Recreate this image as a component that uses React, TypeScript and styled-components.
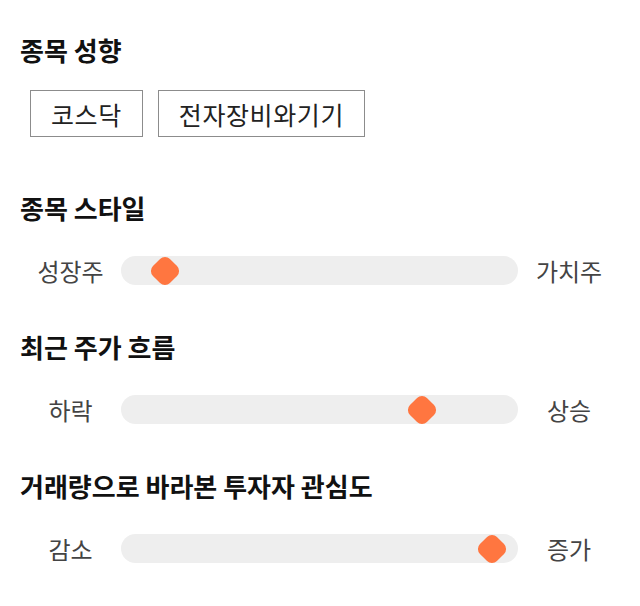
import * as React from 'react';
import styled, { createGlobalStyle } from 'styled-components';

const GlobalStyle = createGlobalStyle`
  body {
    margin: 0;
    background: #ffffff;
    font-family: "Noto Sans CJK KR", "Noto Sans", sans-serif;
  }
`;

const Page = styled.div`
  width: 640px;
  box-sizing: border-box;
  padding: 34px 20px 0 20px;
`;

const Section = styled.section<{ $after: number }>`
  display: flex;
  flex-direction: column;
  margin-bottom: ${(p) => p.$after}px;
`;

const Heading = styled.h2<{ $space: number }>`
  margin: 0 0 ${(p) => p.$space}px 0;
  font-size: 26px;
  line-height: 32px;
  font-weight: 700;
  color: #111111;
`;

const TagList = styled.div`
  display: flex;
  gap: 15px;
  padding-left: 10px;
`;

const Tag = styled.div`
  height: 47px;
  box-sizing: border-box;
  border: 1px solid #8c8c8c;
  padding: 0 20px;
  display: flex;
  align-items: center;
  font-size: 25px;
  letter-spacing: 0.6px;
  color: #222222;
`;

const SliderRow = styled.div`
  display: grid;
  grid-template-columns: 101px 397px 102px;
  align-items: center;
  height: 40px;
`;

const SideLabel = styled.span`
  text-align: center;
  font-size: 24px;
  color: #444444;
`;

const Track = styled.div`
  position: relative;
  height: 29px;
  border-radius: 15px;
  background: #eeeeee;
`;

const Thumb = styled.div`
  position: absolute;
  top: 50%;
  width: 24px;
  height: 24px;
  border-radius: 7px;
  background: #ff7640;
  transform: translate(-50%, -50%) rotate(45deg);
`;

interface ISliderProps {
  title: string;
  left: string;
  right: string;
  value: number;
  after: number;
}

const StyleSlider: React.FunctionComponent<ISliderProps> = ({ title, left, right, value, after }) => (
  <Section $after={after}>
    <Heading $space={26}>{title}</Heading>
    <SliderRow>
      <SideLabel>{left}</SideLabel>
      <Track>
        {/* thumb centre as a fraction of the track width */}
        <Thumb style={{ left: `${value * 100}%`, marginTop: 1 }} />
      </Track>
      <SideLabel>{right}</SideLabel>
    </SliderRow>
  </Section>
);

const sliders = [
  { title: '종목 스타일', left: '성장주', right: '가치주', value: 0.11 },
  { title: '최근 주가 흐름', left: '하락', right: '상승', value: 0.757 },
  { title: '거래량으로 바라본 투자자 관심도', left: '감소', right: '증가', value: 0.935 },
];

const App: React.FunctionComponent = () => {
  return (
    <Page>
      <GlobalStyle />
      <Section $after={55}>
        <Heading $space={24}>종목 성향</Heading>
        <TagList>
          <Tag>코스닥</Tag>
          <Tag>전자장비와기기</Tag>
        </TagList>
      </Section>
      {sliders.map((s) => (
        <StyleSlider key={s.title} {...s} after={41} />
      ))}
    </Page>
  );
};

export default App;
